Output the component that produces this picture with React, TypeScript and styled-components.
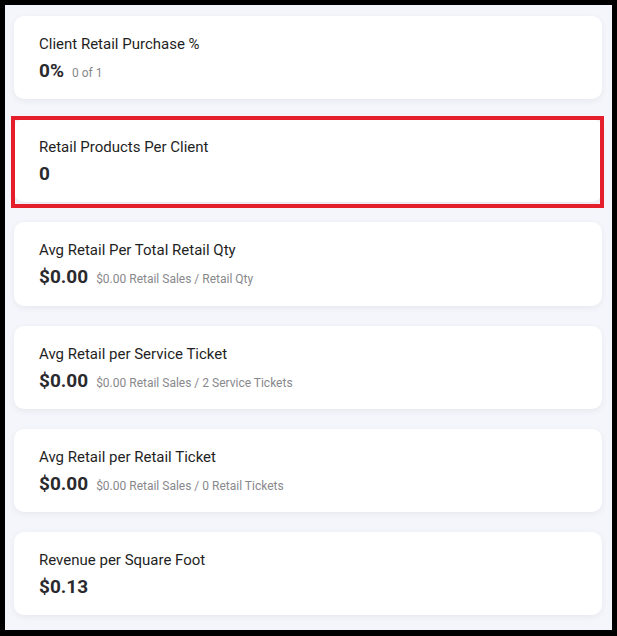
import styled, { createGlobalStyle } from "styled-components";

const GlobalStyle = createGlobalStyle`
  html, body {
    margin: 0;
    padding: 0;
    background: #000;
  }
  body {
    font-family: Roboto, "Liberation Sans", Arial, sans-serif;
  }
`;

const Frame = styled.div`
  width: 617px;
  height: 636px;
  box-sizing: border-box;
  border: 5px solid #000;
  border-bottom-width: 6px;
  background-color: #f5f6fb;
  overflow: hidden;
`;

const List = styled.div`
  display: flex;
  flex-direction: column;
  gap: 20px;
  padding: 11px 10px 15px 9px;
`;

const Card = styled.div<{ $highlight?: boolean }>`
  position: relative;
  height: 83.2px;
  box-sizing: border-box;
  padding: 18px 25px 0 25px;
  background-color: #fff;
  border-radius: 10px;
  box-shadow: 0 2px 6px rgba(40, 50, 90, 0.07);

  ${(p) =>
    p.$highlight &&
    `
    &::after {
      content: "";
      position: absolute;
      top: -3px;
      left: -3px;
      right: -2px;
      bottom: -6px;
      border: 4px solid #e41e2b;
      pointer-events: none;
    }
  `}
`;

const Title = styled.div`
  font-size: 15px;
  line-height: 20px;
  color: #1f1f24;
  font-weight: 400;
`;

const ValueRow = styled.div`
  display: flex;
  align-items: baseline;
  gap: 8px;
  margin-top: 4px;
`;

const Value = styled.span`
  font-size: 19px;
  line-height: 26px;
  font-weight: 700;
  color: #2a2a2e;
`;

const Detail = styled.span`
  font-size: 12px;
  color: #88888c;
`;

type Metric = {
  title: string;
  value: string;
  detail?: string;
  highlight?: boolean;
};

const metrics: Metric[] = [
  { title: "Client Retail Purchase %", value: "0%", detail: "0 of 1" },
  { title: "Retail Products Per Client", value: "0", highlight: true },
  {
    title: "Avg Retail Per Total Retail Qty",
    value: "$0.00",
    detail: "$0.00 Retail Sales / Retail Qty",
  },
  {
    title: "Avg Retail per Service Ticket",
    value: "$0.00",
    detail: "$0.00 Retail Sales / 2 Service Tickets",
  },
  {
    title: "Avg Retail per Retail Ticket",
    value: "$0.00",
    detail: "$0.00 Retail Sales / 0 Retail Tickets",
  },
  { title: "Revenue per Square Foot", value: "$0.13" },
];

export default function App() {
  return (
    <>
      <GlobalStyle />
      <Frame>
        <List>
          {metrics.map((m) => (
            <Card key={m.title} $highlight={m.highlight}>
              <Title>{m.title}</Title>
              <ValueRow>
                <Value>{m.value}</Value>
                {m.detail && <Detail>{m.detail}</Detail>}
              </ValueRow>
            </Card>
          ))}
        </List>
      </Frame>
    </>
  );
}
